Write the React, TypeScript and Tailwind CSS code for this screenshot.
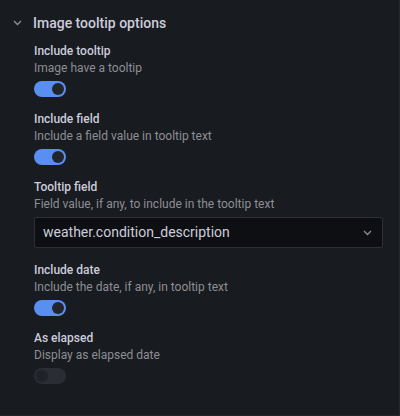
import React from 'react';

interface IOption {
  label: string;
  description: string;
  checked?: boolean;
}

const Switch = ({ checked }: { checked?: boolean }) => (
  <div
    className={
      checked
        ? 'flex h-4 w-8 items-center justify-end rounded-full bg-[#5a8ff2] px-[2px]'
        : 'flex h-4 w-8 items-center justify-start rounded-full bg-[#2a2d33] px-[2px]'
    }
  >
    <div className={checked ? 'h-3 w-3 rounded-full bg-[#22252b]' : 'h-3 w-3 rounded-full bg-[#1f2227]'} />
  </div>
);

const FieldHeader = ({ label, description }: { label: string; description: string }) => (
  <div className="flex flex-col">
    <span className="text-[12px] leading-[17px] font-medium text-[#ccccdc]">{label}</span>
    <span className="text-[12px] leading-[17px] text-[#8e8e96]">{description}</span>
  </div>
);

const SwitchField = ({ label, description, checked }: IOption) => (
  <div className="flex flex-col gap-[4px]">
    <FieldHeader label={label} description={description} />
    <Switch checked={checked} />
  </div>
);

const App = () => {
  return (
    <div
      className="h-[416px] w-[400px] border-r border-b border-[#23262b] bg-[#181b1f]"
      style={{ fontFamily: 'Roboto, "Noto Sans", sans-serif' }}
    >
      <div className="flex items-center gap-[11px] pt-[13px] pl-[13px]">
        <svg width="9" height="6" viewBox="0 0 9 6" fill="none">
          <path d="M1 1l3.5 3.5L8 1" stroke="#8e8e96" strokeWidth="1.4" />
        </svg>
        <span className="text-[14px] leading-[20px] font-medium text-[#ccccdc]">Image tooltip options</span>
      </div>

      <div className="flex flex-col gap-[14px] pt-[10px] pl-[34px] pr-[16px]">
        <SwitchField label="Include tooltip" description="Image have a tooltip" checked />
        <SwitchField label="Include field" description="Include a field value in tooltip text" checked />

        <div className="flex flex-col gap-[4px]">
          <FieldHeader label="Tooltip field" description="Field value, if any, to include in the tooltip text" />
          <div className="flex h-[31px] items-center justify-between rounded-[2px] border border-[#2c2f35] bg-[#0e0f12] pl-[8px] pr-[10px]">
            <span className="text-[14px] text-[#ccccdc]">weather.condition_description</span>
            <svg width="9" height="6" viewBox="0 0 9 6" fill="none">
              <path d="M1 1l3.5 3.5L8 1" stroke="#8e8e96" strokeWidth="1.3" />
            </svg>
          </div>
        </div>

        <SwitchField label="Include date" description="Include the date, if any, in tooltip text" checked />
        <SwitchField label="As elapsed" description="Display as elapsed date" />
      </div>
    </div>
  );
};

export default App;
